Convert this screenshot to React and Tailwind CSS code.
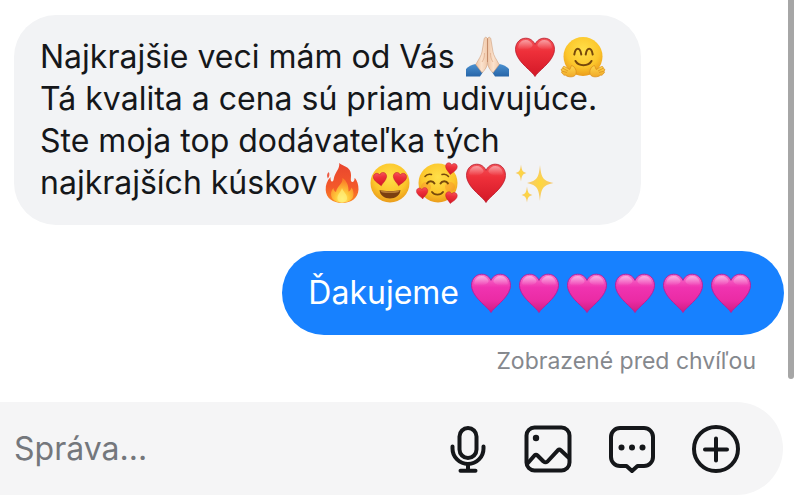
// Gradients shared by all the emoji below
const EmojiDefs = () => (
  <svg className="absolute size-0" aria-hidden="true">
    <defs>
      <radialGradient id="face" cx="0.5" cy="0.35" r="0.65">
        <stop offset="0" stopColor="#ffe04a" />
        <stop offset="0.65" stopColor="#fcc62b" />
        <stop offset="1" stopColor="#eb9c1b" />
      </radialGradient>
      <linearGradient id="hand" x1="0" y1="0" x2="0" y2="1">
        <stop offset="0" stopColor="#ffd84d" />
        <stop offset="1" stopColor="#f0a92a" />
      </linearGradient>
      <linearGradient id="red" x1="0" y1="0" x2="0" y2="1">
        <stop offset="0" stopColor="#f4545a" />
        <stop offset="0.35" stopColor="#ee303a" />
        <stop offset="1" stopColor="#d31827" />
      </linearGradient>
      <linearGradient id="pink" x1="0" y1="0" x2="0" y2="1">
        <stop offset="0" stopColor="#f777cd" />
        <stop offset="0.35" stopColor="#f033b0" />
        <stop offset="0.7" stopColor="#ea2ba4" />
        <stop offset="1" stopColor="#cf1d80" />
      </linearGradient>
      <linearGradient id="shine" x1="0" y1="0" x2="0" y2="1">
        <stop offset="0" stopColor="#fff" stopOpacity="0.45" />
        <stop offset="1" stopColor="#fff" stopOpacity="0" />
      </linearGradient>
      <linearGradient id="flame" x1="0" y1="0" x2="0" y2="1">
        <stop offset="0" stopColor="#e8452f" />
        <stop offset="0.6" stopColor="#f4592a" />
        <stop offset="1" stopColor="#fb8a25" />
      </linearGradient>
      <radialGradient id="flameCore" cx="0.5" cy="0.85" r="0.75">
        <stop offset="0" stopColor="#fff27a" />
        <stop offset="0.4" stopColor="#ffc93a" />
        <stop offset="1" stopColor="#fa7f27" />
      </radialGradient>
      <linearGradient id="skin" x1="0" y1="0" x2="1" y2="0">
        <stop offset="0" stopColor="#eec4a4" />
        <stop offset="0.5" stopColor="#fbe2cd" />
        <stop offset="1" stopColor="#f0c9ab" />
      </linearGradient>
      <linearGradient id="sleeve" x1="0" y1="0" x2="0" y2="1">
        <stop offset="0" stopColor="#4a90d0" />
        <stop offset="1" stopColor="#2765a8" />
      </linearGradient>
      <radialGradient id="gold" cx="0.5" cy="0.5" r="0.5">
        <stop offset="0" stopColor="#ffd83a" />
        <stop offset="1" stopColor="#f3c678" />
      </radialGradient>
    </defs>
  </svg>
);

const HEART =
  "M20 39.5C17.5 34.5 3.5 26 .9 15.5-.9 7.2 4.2 1.2 10.7 1.2c4.5 0 7.7 2.6 9.3 6.2 1.6-3.6 4.8-6.2 9.3-6.2 6.5 0 11.6 6 9.8 14.3C36.5 26 22.5 34.5 20 39.5Z";

const Emoji = ({ label, children }) => (
  <svg viewBox="0 0 40 40" role="img" aria-label={label} className="size-10 shrink-0 overflow-visible">
    {children}
  </svg>
);

const Shine = () => (
  <>
    <path d="M3 11C3.5 6 6.5 3 10.5 3c3.5 0 6 2 7.2 5C17 13 5 14 3 11Z" fill="url(#shine)" />
    <path d="M37 11C36.5 6 33.5 3 29.5 3c-3.5 0-6 2-7.2 5C23 13 35 14 37 11Z" fill="url(#shine)" />
  </>
);

const RedHeart = () => (
  <Emoji label="červené srdce">
    <path d={HEART} fill="url(#red)" stroke="#b81425" strokeWidth="0.8" />
    <Shine />
  </Emoji>
);

const PinkHeart = () => (
  <Emoji label="ružové srdce">
    <path d={HEART} fill="url(#pink)" stroke="#b5209c" strokeWidth="1" />
    <Shine />
  </Emoji>
);

const MiniHeart = ({ transform }) => (
  <path d={HEART} transform={transform} fill="url(#red)" stroke="#c21b2b" strokeWidth="1.5" />
);

const PrayingHands = () => (
  <Emoji label="zopäté ruky">
    <path d="M8.5 27 16 35 13 39.5H-1V32C1.5 29.5 4.5 27.8 8.5 27Z" fill="url(#sleeve)" />
    <path d="M32.5 27 25 35 28 39.5H42V32C39.5 29.5 36.5 27.8 32.5 27Z" fill="url(#sleeve)" />
    <path d="M20.5 1.5C18.8-.7 17.2.3 17 3L15 15C14.5 18.5 11.5 22.5 8.8 27.5L15 35.8C18 33 20.5 29.5 20.5 25Z" fill="url(#skin)" stroke="#cf9d7b" strokeWidth="0.6" />
    <path d="M20.5 1.5C22.2-.7 23.8.3 24 3L26 15C26.5 18.5 29.5 22.5 32.2 27.5L26 35.8C23 33 20.5 29.5 20.5 25Z" fill="url(#skin)" stroke="#cf9d7b" strokeWidth="0.6" />
    <path d="M20.5 1.5V25" stroke="#c48b69" strokeWidth="1" />
    <path d="M17.5 16C17.5 20 17 22 15 25M23.5 16C23.5 20 24 22 26 25" fill="none" stroke="#dfae8e" strokeWidth="0.8" />
  </Emoji>
);

const HuggingFace = () => (
  <Emoji label="objímajúca tvár">
    <circle cx="20" cy="19.5" r="19.5" fill="url(#face)" />
    <path d="M11.3 17.5C12 13 13.4 11.8 14.8 11.8S17.6 13 18.3 17.5M22.7 17.5C23.4 13 24.8 11.8 26.2 11.8S29 13 29.7 17.5" fill="none" stroke="#76480b" strokeWidth="2" strokeLinecap="round" />
    <path d="M12.5 24C15.5 29.5 25.5 29.5 28.5 24" fill="none" stroke="#76480b" strokeWidth="2" strokeLinecap="round" />
    <g fill="url(#hand)" stroke="#dc911d" strokeWidth="0.8" strokeLinejoin="round">
      <path d="M12.8 37.5C14.2 34 12 29.5 8.5 28.5L6.8 32.5 1.5 29.5C0 29-.8 30.6.3 31.5L-.8 31.6C-2.2 32-2 33.7-.8 34.2-2 34.8-1.4 36.5 0 36.6 0 38 1.4 38.5 2.5 38.2 5.5 40.5 11 40.5 12.8 37.5Z" />
      <path d="M27.2 37.5C25.8 34 28 29.5 31.5 28.5L33.2 32.5 38.5 29.5C40 29 40.8 30.6 39.7 31.5L40.8 31.6C42.2 32 42 33.7 40.8 34.2 42 34.8 41.4 36.5 40 36.6 40 38 38.6 38.5 37.5 38.2 34.5 40.5 29 40.5 27.2 37.5Z" />
    </g>
    <path d="M.3 31.5 5 34M-.8 34.2 4 35.5M39.7 31.5 35 34M40.8 34.2 36 35.5" stroke="#dc911d" strokeWidth="0.8" />
  </Emoji>
);

const Fire = () => (
  <Emoji label="oheň">
    <path d="M17.2 0C18 5 14 8.5 12.3 13.5 11.5 16 11.8 18 10.5 18.5 8.7 19 8.3 15.5 8.6 14 5 17.5 3.5 22 3.7 27 4 35 11 40 20 40 29.5 40 36 35 36.5 26.5 36.6 21.5 35 17.5 32.7 14.7 32.5 18.5 31 19.5 29.8 18.8 27.5 17.5 30.5 12 27.8 7.2 25.5 3.3 20.5 3 17.2 0Z" fill="url(#flame)" />
    <path d="M6.8 9C4.5 11 4.8 13 5.8 15.5 7.5 13.5 7.8 11 6.8 9Z" fill="#ee5a42" />
    <path d="M20.5 15C21 21 14.8 23 14 29 12.5 28.5 11.5 27 11.5 25 9 27.5 8.5 31 9.5 34 11 38 15.5 39.7 20 39.7S29.5 38 31 34C32.2 30.5 31.3 27 29.5 24.5 29 26.5 28 28 26.5 28.5 26.8 23 25 18 20.5 15Z" fill="url(#flameCore)" />
    <path d="M20 25C19 29 16 30.5 15.5 34.5 15.2 38 17.5 39.5 20 39.5S25.5 38 25 34.5C24.5 31 21.5 29 20 25Z" fill="#fff07a" opacity="0.7" />
  </Emoji>
);

const HeartEyes = () => (
  <Emoji label="zamilovaná tvár">
    <circle cx="20" cy="20" r="19.5" fill="url(#face)" />
    <MiniHeart transform="rotate(-8 10 16) translate(3.5 9.5) scale(0.34)" />
    <MiniHeart transform="rotate(8 30 16) translate(22.8 9.5) scale(0.34)" />
    <path d="M9.5 27C13 28.3 27 28.3 30.5 27 30 32.5 25.5 35.5 20 35.5S10 32.5 9.5 27Z" fill="#7b3f10" />
    <path d="M10.5 27.5C15 28.5 25 28.5 29.5 27.5 29 29.5 27 30 20 30S11 29.5 10.5 27.5Z" fill="#b77b35" />
  </Emoji>
);

const LovingFace = () => (
  <Emoji label="tvár so srdiečkami">
    <circle cx="20" cy="20" r="19.5" fill="url(#face)" />
    <circle cx="8" cy="24" r="5" fill="#f4772b" opacity="0.3" />
    <circle cx="32" cy="24" r="5" fill="#f4772b" opacity="0.3" />
    <g fill="none" stroke="#76480b" strokeLinecap="round">
      <path d="M7 13.5C8.5 11.5 11 10.8 13.5 11.5M24 11.5C26.5 10.8 29 11.5 30.5 13.5" strokeWidth="1.5" />
      <path d="M9 20.5C10.5 17.5 15 17.5 16.5 20.5M22.5 20.5C24 17.5 28.5 17.5 30 20.5" strokeWidth="1.9" />
      <path d="M14 29C16.5 32.5 22.5 32.5 25 29" strokeWidth="1.9" />
    </g>
    <MiniHeart transform="translate(28 -1) rotate(8) scale(0.3)" />
    <MiniHeart transform="translate(-2 25) rotate(-5) scale(0.29)" />
    <MiniHeart transform="translate(28 28) rotate(8) scale(0.3)" />
  </Emoji>
);

const Sparkles = () => (
  <Emoji label="iskry">
    <g fill="url(#gold)">
      <path d="M26 2C27.3 14.5 28.5 17.5 39.5 20 28.5 22.5 27.3 25.5 26 38 24.7 25.5 23.5 22.5 13 20 23.5 17.5 24.7 14.5 26 2Z" />
      <path d="M7 1.5C7.8 7.5 8.5 9 12.5 10 8.5 11 7.8 12.5 7 18.5 6.2 12.5 5.5 11 1.5 10 5.5 9 6.2 7.5 7 1.5Z" />
      <path d="M13 23.5C13.8 29.5 14.5 31 18.5 32 14.5 33 13.8 34.5 13 39.5 12.2 34.5 11.5 33 7.5 32 11.5 31 12.2 29.5 13 23.5Z" />
    </g>
  </Emoji>
);

// Composer icons
const Icon = ({ children }) => (
  <svg viewBox="0 0 48 48" fill="none" stroke="currentColor" strokeWidth="4" strokeLinecap="round" strokeLinejoin="round" className="size-12 overflow-visible" aria-hidden="true">
    {children}
  </svg>
);

const MicIcon = () => (
  <Icon>
    <rect x="19.5" y="3" width="17" height="30" rx="8.5" />
    <path d="M12.5 21.5v2a15.5 15.5 0 0 0 31 0v-2M28 39v6.5M20.5 45.8h15" />
  </Icon>
);

const PhotoIcon = () => (
  <Icon>
    <rect x="2.5" y="2.5" width="43" height="43" rx="8" />
    <circle cx="12" cy="13" r="3.2" fill="currentColor" stroke="none" />
    <path d="M3.5 38.5 10.5 30.5Q12 29 13.5 30.5L19.5 36.5Q21.5 38 23.5 36.5L33.8 25.3Q35.3 24 36.8 25.3L44.5 32.5" />
  </Icon>
);

const ReplyIcon = () => (
  <Icon>
    <path d="M12 3h24a9 9 0 0 1 9 9v20a9 9 0 0 1-9 9h-6.5L24 46l-5.5-5H12a9 9 0 0 1-9-9V12a9 9 0 0 1 9-9Z" />
    <g fill="currentColor" stroke="none">
      <circle cx="13.5" cy="22.5" r="3" />
      <circle cx="24" cy="22.5" r="3" />
      <circle cx="34.5" cy="22.5" r="3" />
    </g>
  </Icon>
);

const PlusIcon = () => (
  <Icon>
    <circle cx="24" cy="24" r="22" />
    <path d="M24 13.5v22M13 24.5h22" />
  </Icon>
);

const actions = [
  { label: "Hlasová správa", icon: MicIcon },
  { label: "Fotka", icon: PhotoIcon },
  { label: "Rýchla odpoveď", icon: ReplyIcon },
  { label: "Viac", icon: PlusIcon },
];

const Line = ({ children }) => <p className="flex items-center whitespace-nowrap">{children}</p>;

const Emojis = ({ className, children }) => (
  <span className={`flex gap-2 ${className}`}>{children}</span>
);

export default function App() {
  return (
    <div className="bg-white font-['Inter',sans-serif] text-[32px] leading-[42px] text-[#15171a]">
      <EmojiDefs />

      <div className="flex gap-1 pr-1.5">
        <main className="flex flex-1 flex-col pt-[15px] pb-0.5 pl-3.5">
          <div className="self-start rounded-[42px] bg-[#f2f3f5] py-[21px] pr-[38px] pl-[26px]">
            <Line>
              Najkrajšie veci mám od Vás
              <Emojis className="ml-3">
                <PrayingHands />
                <RedHeart />
                <HuggingFace />
              </Emojis>
            </Line>
            <Line>Tá kvalita a cena sú priam udivujúce.</Line>
            <Line>Ste moja top dodávateľka tých</Line>
            <Line>
              najkrajších kúskov
              <Emojis className="ml-1">
                <Fire />
                <HeartEyes />
                <LovingFace />
                <RedHeart />
                <Sparkles />
              </Emojis>
            </Line>
          </div>

          <div className="mt-[26px] self-end rounded-full bg-[#1781ff] py-[21px] pr-[33px] pl-[26px] text-white">
            <Line>
              Ďakujeme
              <Emojis className="ml-3">
                <PinkHeart />
                <PinkHeart />
                <PinkHeart />
                <PinkHeart />
                <PinkHeart />
                <PinkHeart />
              </Emojis>
            </Line>
          </div>

          <p className="mt-2.5 mr-7 self-end text-[23px] leading-8 text-[#85888d]">Zobrazené pred chvíľou</p>
        </main>
        <div className="w-1.5 rounded-b-full bg-[#a6a6a6]" />
      </div>

      <form className="mt-[23px] mr-[17px] flex h-[93px] items-center rounded-r-full bg-[#f5f5f6] pr-[43px] pl-3.5">
        <input
          type="text"
          aria-label="Správa"
          placeholder="Správa..."
          className="min-w-0 flex-1 bg-transparent outline-none placeholder:text-[#74777c]"
        />
        <div className="flex gap-9">
          {actions.map(({ label, icon: ActionIcon }) => (
            <button key={label} type="button" aria-label={label}>
              <ActionIcon />
            </button>
          ))}
        </div>
      </form>
    </div>
  );
}
